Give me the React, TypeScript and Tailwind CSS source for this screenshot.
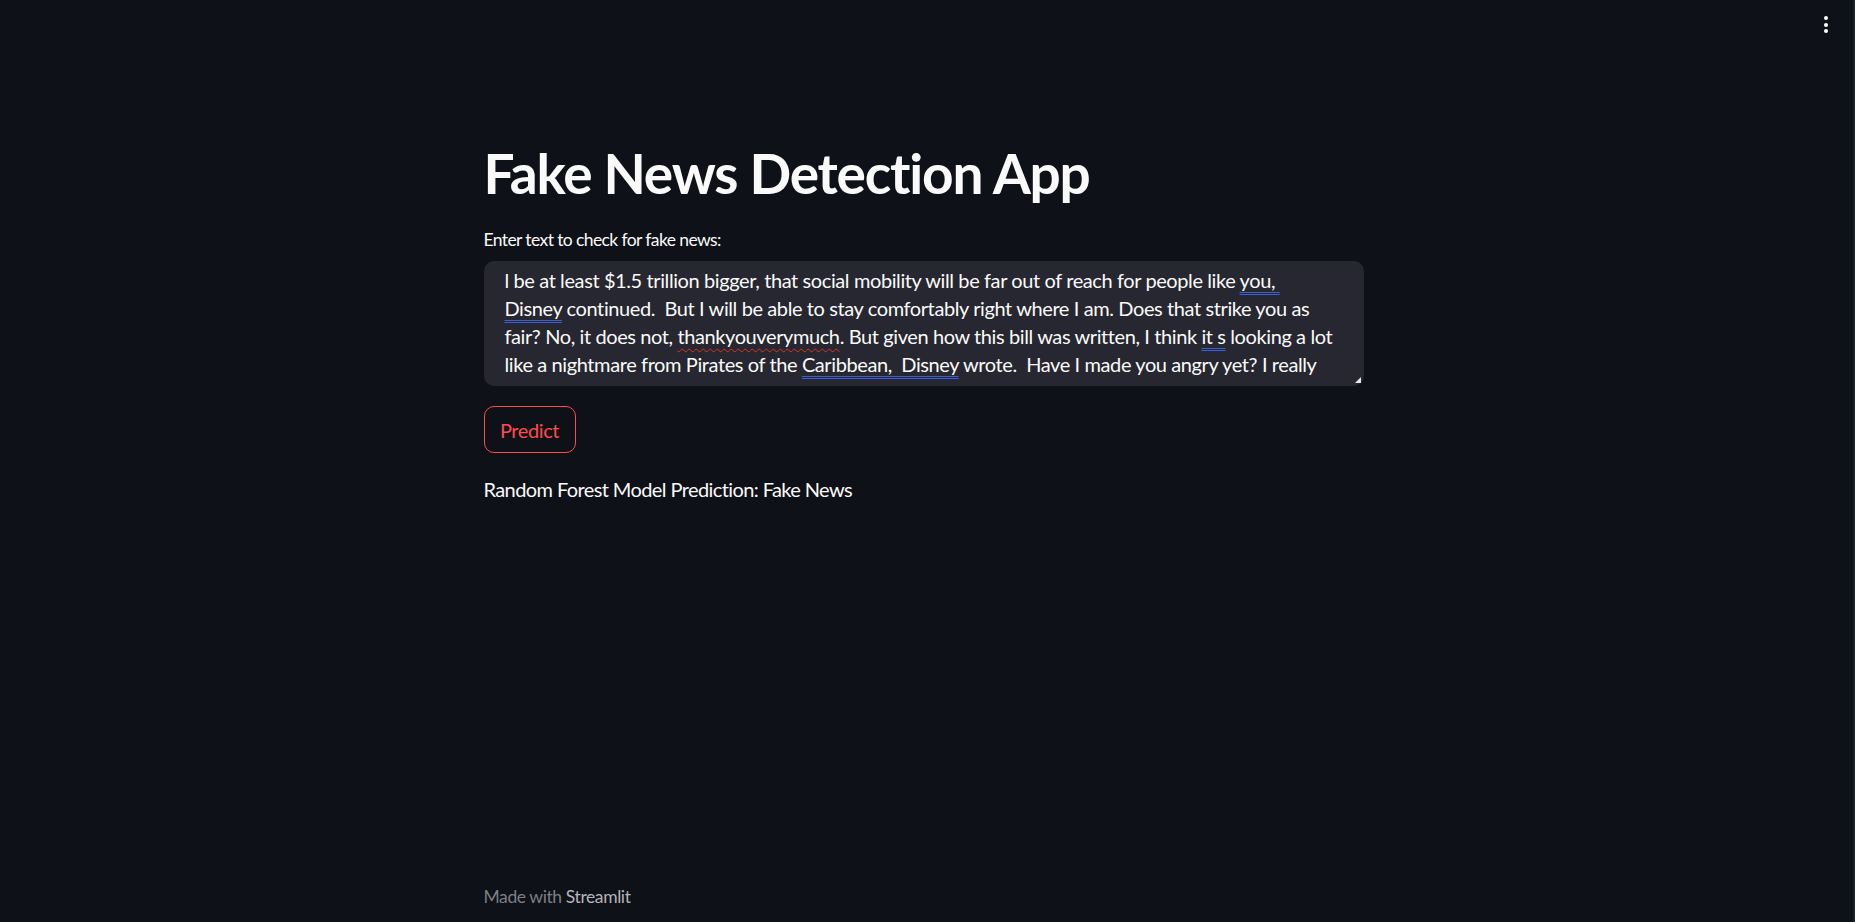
import React from "react"

const blue = "underline decoration-double decoration-[#3d5fd6] underline-offset-[4px] decoration-[1px]"
const red = "underline decoration-wavy decoration-[#d9342b] underline-offset-[4px] decoration-[1px]"

export default function App() {
  return (
    <div
      className="h-[922px] w-full bg-[#0e1117] text-[#fafafa] flex overflow-hidden"
      style={{ fontFamily: "Lato, 'Noto Sans', sans-serif" }}
    >
      <div className="flex-1 relative flex flex-col">
        {/* main menu */}
        <button className="absolute top-[14px] right-[17px] flex flex-col gap-[2.5px] p-[2px]">
          <span className="w-[4px] h-[4px] rounded-full bg-white" />
          <span className="w-[4px] h-[4px] rounded-full bg-white" />
          <span className="w-[4px] h-[4px] rounded-full bg-white" />
        </button>

        <main className="w-[880px] mx-auto flex-1 pt-[140px]">
          <h1 className="text-[55px] leading-[66px] font-bold tracking-[-1.2px]">Fake News Detection App</h1>

          <label className="block mt-[23px] text-[17.5px] leading-[22px] tracking-[-0.6px]">
            Enter text to check for fake news:
          </label>

          <div className="relative mt-[10px] h-[125px] rounded-[10px] bg-[#262730] pl-[21px] pt-[5px] overflow-hidden">
            <div className="text-[20px] leading-[28px] whitespace-pre tracking-[-0.4px]">
              <div>
                l be at least $1.5 trillion bigger, that social mobility will be far out of reach for people like <span className={blue}>you, </span>
              </div>
              <div>
                <span className={blue}>Disney</span> continued.  But I will be able to stay comfortably right where I am. Does that strike you as
              </div>
              <div>
                fair? No, it does not, <span className={red}>thankyouverymuch</span>. But given how this bill was written, I think <span className={blue}>it s</span> looking a lot
              </div>
              <div>
                like a nightmare from Pirates of the <span className={blue}>Caribbean,  Disney</span> wrote.  Have I made you angry yet? I really
              </div>
            </div>
            <svg className="absolute right-[3px] bottom-[3px]" width="6" height="6" viewBox="0 0 6 6">
              <path d="M6 0 L6 6 L0 6 Z" fill="#e6e6e6" />
            </svg>
          </div>

          <button className="mt-[20px] h-[47px] w-[92px] rounded-[10px] border border-[#ff4b4b] text-[#ff4b4b] text-[20px] font-normal tracking-[-0.4px]">
            Predict
          </button>

          <p className="mt-[22px] text-[20px] leading-[28px] tracking-[-0.6px]">
            Random Forest Model Prediction: Fake News
          </p>
        </main>

        <footer className="w-[880px] mx-auto pb-[14px] text-[17.5px] leading-[22px] tracking-[-0.4px] text-[#7d7f86]">
          Made with <span className="text-[#b4b5b8]">Streamlit</span>
        </footer>
      </div>
      <div className="w-[8px] flex justify-end">
        <div className="w-[2px] h-full bg-[#1e222a] rounded-b-[2px]" />
      </div>
    </div>
  )
}
